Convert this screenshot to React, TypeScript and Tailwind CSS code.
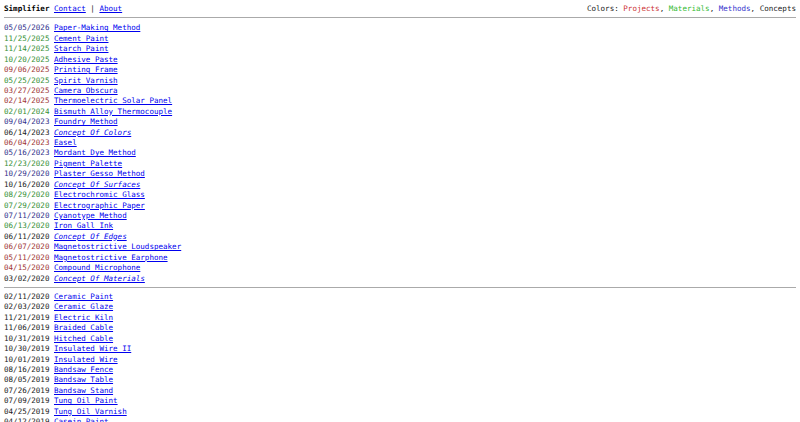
import React from "react";

type Kind = "project" | "material" | "method" | "concept";

type Entry = { date: string; title: string; kind: Kind };

const recent: Entry[] = [
  { date: "05/05/2026", title: "Paper-Making Method", kind: "method" },
  { date: "11/25/2025", title: "Cement Paint", kind: "material" },
  { date: "11/14/2025", title: "Starch Paint", kind: "material" },
  { date: "10/20/2025", title: "Adhesive Paste", kind: "material" },
  { date: "09/06/2025", title: "Printing Frame", kind: "project" },
  { date: "05/25/2025", title: "Spirit Varnish", kind: "material" },
  { date: "03/27/2025", title: "Camera Obscura", kind: "project" },
  { date: "02/14/2025", title: "Thermoelectric Solar Panel", kind: "project" },
  { date: "02/01/2024", title: "Bismuth Alloy Thermocouple", kind: "material" },
  { date: "09/04/2023", title: "Foundry Method", kind: "method" },
  { date: "06/14/2023", title: "Concept Of Colors", kind: "concept" },
  { date: "06/04/2023", title: "Easel", kind: "project" },
  { date: "05/16/2023", title: "Mordant Dye Method", kind: "method" },
  { date: "12/23/2020", title: "Pigment Palette", kind: "material" },
  { date: "10/29/2020", title: "Plaster Gesso Method", kind: "method" },
  { date: "10/16/2020", title: "Concept Of Surfaces", kind: "concept" },
  { date: "08/29/2020", title: "Electrochromic Glass", kind: "material" },
  { date: "07/29/2020", title: "Electrographic Paper", kind: "material" },
  { date: "07/11/2020", title: "Cyanotype Method", kind: "method" },
  { date: "06/13/2020", title: "Iron Gall Ink", kind: "material" },
  { date: "06/11/2020", title: "Concept Of Edges", kind: "concept" },
  { date: "06/07/2020", title: "Magnetostrictive Loudspeaker", kind: "project" },
  { date: "05/11/2020", title: "Magnetostrictive Earphone", kind: "project" },
  { date: "04/15/2020", title: "Compound Microphone", kind: "project" },
  { date: "03/02/2020", title: "Concept Of Materials", kind: "concept" },
];

// older entries, no colour coding
const older: [string, string][] = [
  ["02/11/2020", "Ceramic Paint"],
  ["02/03/2020", "Ceramic Glaze"],
  ["11/21/2019", "Electric Kiln"],
  ["11/06/2019", "Braided Cable"],
  ["10/31/2019", "Hitched Cable"],
  ["10/30/2019", "Insulated Wire II"],
  ["10/01/2019", "Insulated Wire"],
  ["08/16/2019", "Bandsaw Fence"],
  ["08/05/2019", "Bandsaw Table"],
  ["07/26/2019", "Bandsaw Stand"],
  ["07/09/2019", "Tung Oil Paint"],
  ["04/25/2019", "Tung Oil Varnish"],
  ["04/12/2019", "Casein Paint"],
  ["03/30/2019", "Milk Paint"],
];

const dateColor: Record<Kind, string> = {
  project: "text-[#a03535]",
  material: "text-[#359035]",
  method: "text-[#30308a]",
  concept: "text-[#1a1a1a]",
};

function Row({ date, title, kind }: { date: string; title: string; kind?: Kind }) {
  return (
    <div className="whitespace-pre">
      <span className={kind ? dateColor[kind] : "text-[#1a1a1a]"}>{date}</span>{" "}
      <a
        href="#"
        className={`text-[#0000ee] underline ${kind === "concept" ? "italic" : ""}`}
      >
        {title}
      </a>
    </div>
  );
}

export default function App() {
  return (
    <div
      className="bg-white min-h-[422px] px-[4px] pt-[4px] text-[7.55px] leading-[10.42px] text-[#1a1a1a]"
      style={{ fontFamily: '"DejaVu Sans Mono", monospace' }}
    >
      {/* Header */}
      <div className="flex justify-between">
        <div className="whitespace-pre">
          <span className="font-bold text-black">Simplifier</span>{" "}
          <a href="#" className="text-[#0000ee] underline">
            Contact
          </a>{" "}
          |{" "}
          <a href="#" className="text-[#0000ee] underline">
            About
          </a>
        </div>
        <div className="whitespace-pre">
          Colors: <span className="text-[#cc3333]">Projects</span>,{" "}
          <span className="text-[#33bb33]">Materials</span>,{" "}
          <span className="text-[#3333cc]">Methods</span>, Concepts
        </div>
      </div>

      <hr className="mt-[3px] mb-[5px] border-t border-[#aaa]" />

      <div>
        {recent.map((e) => (
          <Row key={e.date + e.title} {...e} />
        ))}
      </div>

      <hr className="mt-[3px] mb-[4px] border-t border-[#aaa]" />

      <div>
        {older.map(([d, t]) => (
          <Row key={d + t} date={d} title={t} />
        ))}
      </div>
    </div>
  );
}
